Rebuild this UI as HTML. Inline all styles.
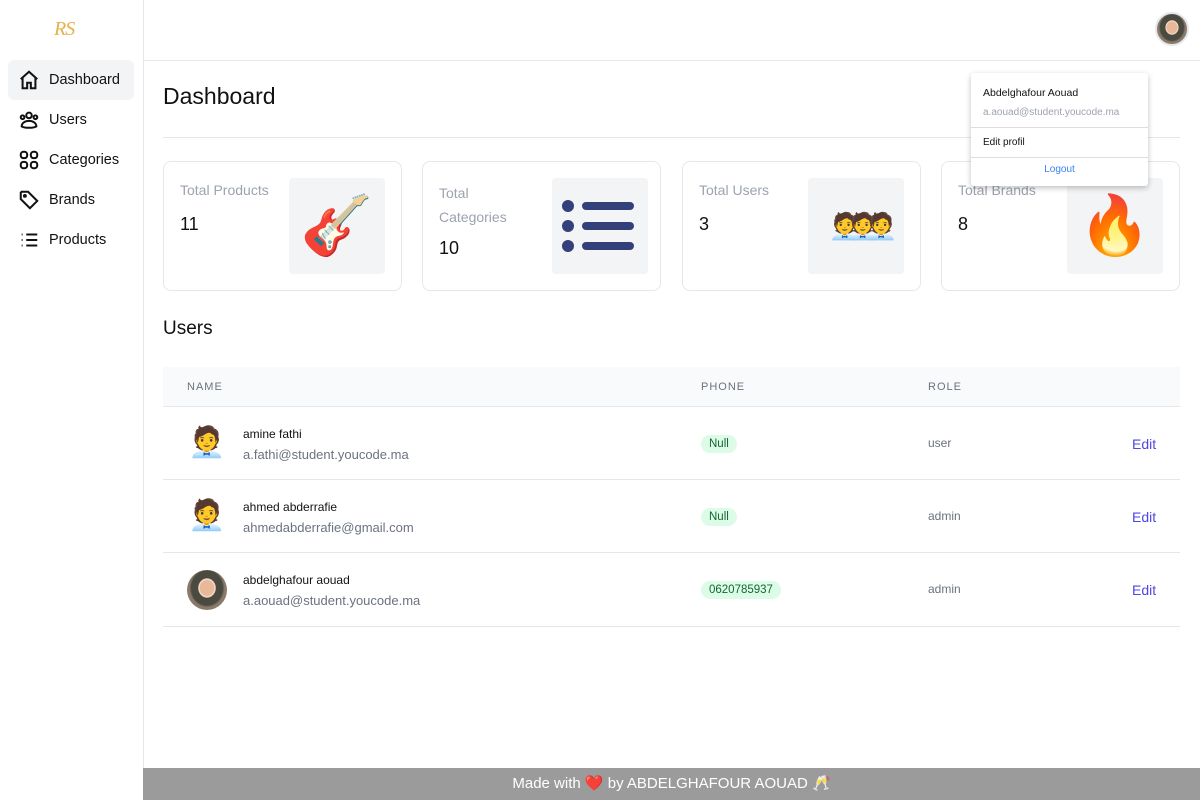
<!DOCTYPE html>
<html><head><meta charset="utf-8"><style>
*{box-sizing:border-box;margin:0;padding:0}
body{width:1200px;height:800px;position:relative;font-family:"Liberation Sans",sans-serif;background:#fff;color:#111;overflow:hidden}
.side{position:absolute;left:0;top:0;width:144px;height:800px;border-right:1px solid #e5e7eb}
.logo{position:absolute;left:54px;top:18px;color:#e8b04a;font-family:"Liberation Serif",serif;font-style:italic;font-size:20px;letter-spacing:-1px}
.nav{position:absolute;left:8px;width:126px;height:40px;display:flex;align-items:center;padding-left:10px;font-size:14.5px;border-radius:6px}
.nav svg{width:22px;height:22px;margin-right:9px;stroke:#111;fill:none;stroke-width:2.2}
.nav.act{background:#f3f4f6}
.top{position:absolute;left:144px;top:0;right:0;height:61px;border-bottom:1px solid #e5e7eb}
.av{position:absolute;border-radius:50%;background:radial-gradient(ellipse at 50% 45%,#e8b89a 0 25%,#f3d6c4 26% 30%,#4a4a40 32% 55%,#8a7a6a 62%);}
h1{position:absolute;left:163px;top:83px;font-weight:400;font-size:23px}
.hr{position:absolute;left:163px;right:20px;top:137px;border-top:1px solid #e5e7eb}
.card{position:absolute;top:161px;width:239px;height:130px;border:1px solid #e5e7eb;border-radius:8px}
.card .t{position:absolute;left:16px;top:16px;color:#9ca3af;font-size:14px;line-height:24px}
.card .n{position:absolute;left:16px;font-size:18px}
.card .im{position:absolute;top:16px;width:96px;height:96px;background:#f3f4f6;border-radius:4px;display:flex;align-items:center;justify-content:center;font-size:58px}
h2{position:absolute;left:163px;top:318px;font-weight:400;font-size:19px}
.th{position:absolute;left:163px;top:367px;width:1017px;height:40px;background:#f9fafb;border-bottom:1px solid #e5e7eb;font-size:11px;color:#6b7280;letter-spacing:1px}
.th span{position:absolute;top:14px}
.row{position:absolute;left:163px;width:1017px;height:73px;border-bottom:1px solid #e5e7eb}
.row .em{position:absolute;left:25px;top:18px;font-size:30px}
.row .nm{position:absolute;left:80px;top:20px;font-size:12px}
.row .ml{position:absolute;left:80px;top:40px;font-size:13px;color:#6b7280}
.row .ph{position:absolute;left:538px;top:28px;background:#dcfce7;color:#166534;font-size:11.5px;padding:3px 8px;border-radius:10px}
.row .rl{position:absolute;left:765px;top:29px;font-size:12px;color:#6b7280}
.row .ed{position:absolute;left:969px;top:29px;font-size:14px;color:#4f46e5}
.dd{position:absolute;left:971px;top:73px;width:177px;height:113px;background:#fff;box-shadow:0 2px 6px rgba(0,0,0,.25);border-radius:3px;font-size:10px}
.foot{position:absolute;left:143px;top:768px;width:1057px;height:32px;background:#9b9b9b;color:#fff;text-align:center;font-size:15px;line-height:32px}
</style></head><body>
<div class="side">
<div class="logo">RS</div>
<div class="nav act" style="top:60px"><svg viewBox="0 0 24 24"><path d="M3 11 12 3l9 8M5 9v12h5v-6h4v6h5V9"/></svg>Dashboard</div>
<div class="nav" style="top:100px"><svg viewBox="0 0 24 24"><circle cx="12" cy="7" r="3"/><circle cx="5" cy="9" r="2"/><circle cx="19" cy="9" r="2"/><path d="M4 19c0-4 4-6 8-6s8 2 8 6c-3 2-13 2-16 0z"/></svg>Users</div>
<div class="nav" style="top:140px"><svg viewBox="0 0 24 24"><rect x="3" y="3" width="7" height="7" rx="3"/><rect x="14" y="3" width="7" height="7" rx="3"/><rect x="3" y="14" width="7" height="7" rx="3"/><rect x="14" y="14" width="7" height="7" rx="3"/></svg>Categories</div>
<div class="nav" style="top:180px"><svg viewBox="0 0 24 24"><path d="M3 4v7l10 10 8-8L11 3H4z"/><circle cx="7.5" cy="7.5" r="1"/></svg>Brands</div>
<div class="nav" style="top:220px"><svg viewBox="0 0 24 24"><path d="M9 6h12M9 12h12M9 18h12M4 6h1M4 12h1M4 18h1"/></svg>Products</div>
</div>
<div class="top"></div>
<div class="av" style="left:1155px;top:12px;width:34px;height:34px;border:2px solid #e5e7eb"></div>
<h1>Dashboard</h1>
<div class="hr"></div>
<div class="card" style="left:163px"><div class="t">Total Products</div><div class="n" style="top:52px">11</div><div class="im" style="left:125px">🎸</div></div>
<div class="card" style="left:422px"><div class="t" style="top:19px">Total<br>Categories</div><div class="n" style="top:76px">10</div><div class="im" style="left:129px;background:#f3f4f6"><svg width="80" height="60" viewBox="0 0 80 60"><g fill="#34407a"><circle cx="8" cy="10" r="6"/><circle cx="8" cy="30" r="6"/><circle cx="8" cy="50" r="6"/><rect x="22" y="6" width="52" height="8" rx="4"/><rect x="22" y="26" width="52" height="8" rx="4"/><rect x="22" y="46" width="52" height="8" rx="4"/></g></svg></div></div>
<div class="card" style="left:682px"><div class="t">Total Users</div><div class="n" style="top:52px">3</div><div class="im" style="left:125px;font-size:26px;letter-spacing:-14px">🧑‍💼🧑‍💼🧑‍💼</div></div>
<div class="card" style="left:941px"><div class="t">Total Brands</div><div class="n" style="top:52px">8</div><div class="im" style="left:125px">🔥</div></div>
<h2>Users</h2>
<div class="th"><span style="left:24px">NAME</span><span style="left:538px">PHONE</span><span style="left:765px">ROLE</span></div>
<div class="row" style="top:407px"><div class="em">🧑‍💼</div><div class="nm">amine fathi</div><div class="ml">a.fathi@student.youcode.ma</div><div class="ph">Null</div><div class="rl">user</div><div class="ed">Edit</div></div>
<div class="row" style="top:480px"><div class="em">🧑‍💼</div><div class="nm">ahmed abderrafie</div><div class="ml">ahmedabderrafie@gmail.com</div><div class="ph">Null</div><div class="rl">admin</div><div class="ed">Edit</div></div>
<div class="row" style="top:553px;height:74px"><div class="av" style="left:24px;top:17px;width:40px;height:40px"></div><div class="nm">abdelghafour aouad</div><div class="ml">a.aouad@student.youcode.ma</div><div class="ph">0620785937</div><div class="rl">admin</div><div class="ed">Edit</div></div>
<div class="dd">
<div style="position:absolute;left:12px;top:14px;font-size:10.5px">Abdelghafour Aouad</div>
<div style="position:absolute;left:12px;top:34px;color:#9ca3af">a.aouad@student.youcode.ma</div>
<div style="position:absolute;left:0;right:0;top:54px;border-top:1px solid #ddd"></div>
<div style="position:absolute;left:12px;top:64px">Edit profil</div>
<div style="position:absolute;left:0;right:0;top:84px;border-top:1px solid #ddd"></div>
<div style="position:absolute;left:0;right:0;top:91px;text-align:center;color:#3b82f6">Logout</div>
</div>
<div class="foot">Made with ❤️ by ABDELGHAFOUR AOUAD 🥂</div>
</body></html>
